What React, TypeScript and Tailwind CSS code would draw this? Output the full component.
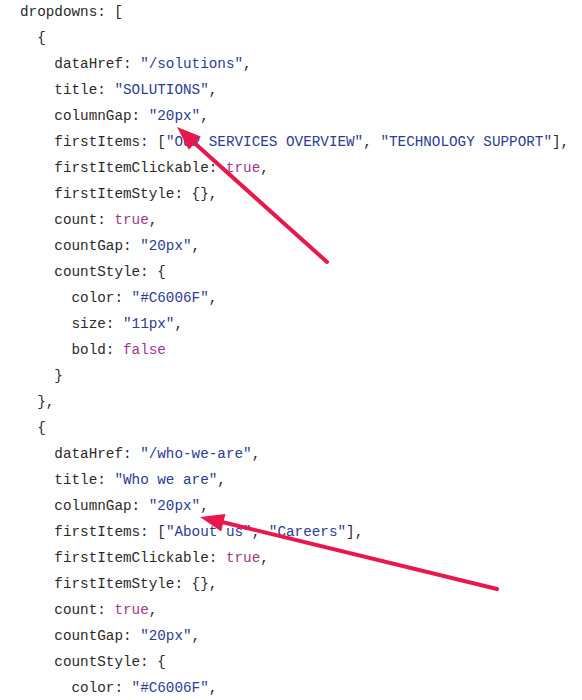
import React from "react";

type Tok = { t: string; c?: "s" | "b" };
type Line = { indent: number; toks: Tok[] };

const L = (indent: number, ...toks: Tok[]): Line => ({ indent, toks });
const k = (t: string): Tok => ({ t });
const s = (t: string): Tok => ({ t, c: "s" });
const b = (t: string): Tok => ({ t, c: "b" });

const lines: Line[] = [
  L(0, k("dropdowns: [")),
  L(1, k("{")),
  L(2, k("dataHref: "), s('"/solutions"'), k(",")),
  L(2, k("title: "), s('"SOLUTIONS"'), k(",")),
  L(2, k("columnGap: "), s('"20px"'), k(",")),
  L(2, k("firstItems: ["), s('"OUR SERVICES OVERVIEW"'), k(", "), s('"TECHNOLOGY SUPPORT"'), k("],")),
  L(2, k("firstItemClickable: "), b("true"), k(",")),
  L(2, k("firstItemStyle: {},")),
  L(2, k("count: "), b("true"), k(",")),
  L(2, k("countGap: "), s('"20px"'), k(",")),
  L(2, k("countStyle: {")),
  L(3, k("color: "), s('"#C6006F"'), k(",")),
  L(3, k("size: "), s('"11px"'), k(",")),
  L(3, k("bold: "), b("false")),
  L(2, k("}")),
  L(1, k("},")),
  L(1, k("{")),
  L(2, k("dataHref: "), s('"/who-we-are"'), k(",")),
  L(2, k("title: "), s('"Who we are"'), k(",")),
  L(2, k("columnGap: "), s('"20px"'), k(",")),
  L(2, k("firstItems: ["), s('"About us"'), k(", "), s('"Careers"'), k("],")),
  L(2, k("firstItemClickable: "), b("true"), k(",")),
  L(2, k("firstItemStyle: {},")),
  L(2, k("count: "), b("true"), k(",")),
  L(2, k("countGap: "), s('"20px"'), k(",")),
  L(2, k("countStyle: {")),
  L(3, k("color: "), s('"#C6006F"'), k(",")),
];

export default function App() {
  return (
    <div className="relative w-[582px] h-[700px] overflow-hidden bg-white">
      <div
        className="pl-[20px] -mt-[1px] text-[14.3px] leading-[26px] text-[#2a2a2a] whitespace-pre"
        style={{ fontFamily: '"Liberation Mono", "Courier New", monospace' }}
      >
        {lines.map((ln, i) => (
          <div key={i}>
            {"  ".repeat(ln.indent)}
            {ln.toks.map((tk, j) => (
              <span
                key={j}
                className={
                  tk.c === "s"
                    ? "text-[#2c3c94]"
                    : tk.c === "b"
                    ? "text-[#a0388c]"
                    : ""
                }
              >
                {tk.t}
              </span>
            ))}
          </div>
        ))}
      </div>
      <svg
        className="absolute left-0 top-0 pointer-events-none"
        width="582"
        height="700"
        viewBox="0 0 582 700"
      >
        <line x1="327" y1="262" x2="190" y2="139" stroke="#e8184c" strokeWidth="4" strokeLinecap="round" />
        <polygon points="177,127 200.8,136.4 188.8,149.8" fill="#e8184c" />
        <line x1="497" y1="589" x2="218" y2="521" stroke="#e8184c" strokeWidth="4" strokeLinecap="round" />
        <polygon points="200,517 225.4,514 221.2,531.4" fill="#e8184c" />
      </svg>
    </div>
  );
}
